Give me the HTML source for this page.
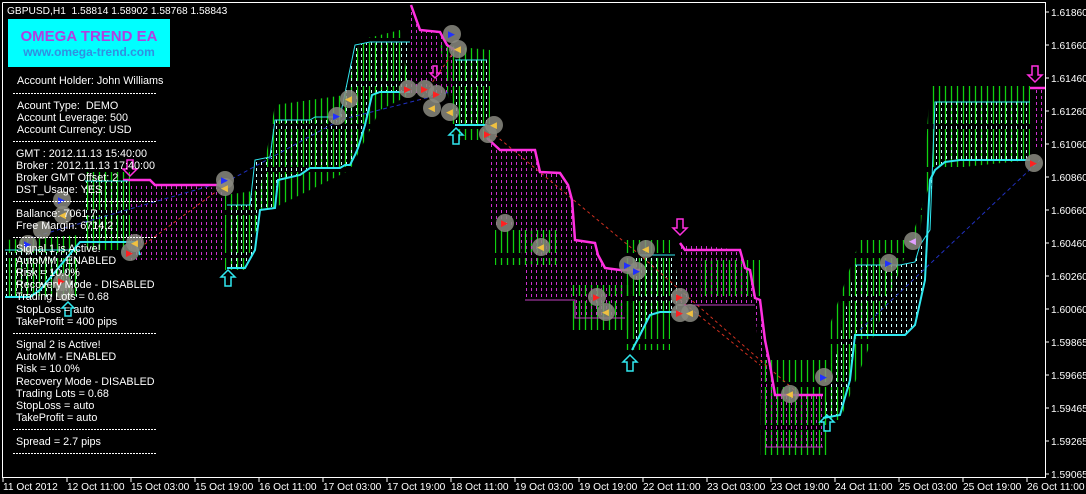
<!DOCTYPE html>
<html><head><meta charset="utf-8">
<style>
html,body{margin:0;padding:0;background:#000;}
body{width:1086px;height:494px;overflow:hidden;position:relative;}
svg{position:absolute;left:0;top:0;}
.t{fill:#fff;font-size:10.8px;font-family:"Liberation Sans",sans-serif;}
.ax{fill:#fff;font-size:10.2px;font-family:"Liberation Sans",sans-serif;}
</style></head><body>
<svg width="1086" height="494" viewBox="0 0 1086 494">
<defs>
<pattern id="pm" width="5" height="6" patternUnits="userSpaceOnUse"><line x1="1.5" y1="0" x2="1.5" y2="3" stroke="#d030d0" stroke-width="1"/></pattern>
<pattern id="pc" width="5" height="6" patternUnits="userSpaceOnUse"><line x1="1.5" y1="0" x2="1.5" y2="3" stroke="#d0ffff" stroke-width="1"/></pattern>
<pattern id="pg" width="6" height="43" patternUnits="userSpaceOnUse"><line x1="3.5" y1="0" x2="3.5" y2="38" stroke="#10d010" stroke-width="1.3"/></pattern>
<g id="mk"><circle r="9" fill="#8a8a80" opacity="0.85"/></g>
</defs>
<rect width="1086" height="494" fill="#000"/>
<g>
<polygon fill="url(#pg)" points="5,240 80,235 80,300 5,300"/>
<polygon fill="url(#pg)" points="85,170 130,170 130,250 85,250"/>
<polygon fill="url(#pg)" points="225,195 260,190 275,105 345,95 360,40 400,30 410,95 380,110 350,170 260,215 245,270 225,270"/>
<polygon fill="url(#pg)" points="440,45 490,50 490,140 455,140"/>
<polygon fill="url(#pg)" points="495,230 560,230 560,265 495,265"/>
<polygon fill="url(#pg)" points="570,285 630,285 630,330 570,330"/>
<polygon fill="url(#pg)" points="625,240 670,240 670,350 625,350"/>
<polygon fill="url(#pg)" points="700,260 760,260 760,300 700,300"/>
<polygon fill="url(#pg)" points="760,360 830,360 830,455 760,455"/>
<polygon fill="url(#pg)" points="828,330 860,240 920,240 930,85 1030,85 1030,160 935,170 900,270 840,420 828,420"/>
</g>
<polygon fill="url(#pm)" points="130,183 225,188 225,260 130,260"/>
<polygon fill="url(#pm)" points="411,8 420,30 440,33 455,52 455,95 411,95"/>
<polygon fill="url(#pm)" points="490,138 500,150 535,150 540,172 560,173 568,185 572,200 575,240 595,243 598,255 605,268 625,270 625,318 575,318 575,300 525,300 520,228 490,228"/>
<polygon fill="url(#pm)" points="680,243 740,250 745,268 750,270 755,298 760,300 765,340 770,365 775,395 823,395 823,447 765,447 755,305 680,305"/>
<polygon fill="url(#pm)" points="1032,88 1045,88 1045,148 1032,148"/>
<polygon fill="url(#pc)" points="5,250 80,250 80,297 5,297"/>
<polygon fill="url(#pc)" points="85,181 128,181 128,240 85,240"/>
<polygon fill="url(#pc)" points="227,205 250,205 255,160 270,157 275,120 310,120 315,117 340,117 355,45 370,42 410,42 410,92 380,92 372,95 365,125 358,148 350,165 310,168 300,175 278,180 275,208 260,210 255,250 245,268 227,268"/>
<polygon fill="url(#pc)" points="455,60 487,60 487,125 455,125"/>
<polygon fill="url(#pc)" points="640,255 675,255 680,312 660,312 650,315 640,335 632,350 632,260"/>
<polygon fill="url(#pc)" points="855,265 900,265 915,262 920,245 930,230 935,100 1030,100 1030,160 960,160 945,162 935,170 930,180 925,280 915,325 905,335 855,335 850,380 840,415 823,418"/>
<polyline fill="none" stroke="#2030c0" stroke-width="1" stroke-dasharray="4,3" points="30,238 230,180 340,120 450,92"/>
<polyline fill="none" stroke="#2030c0" stroke-width="1" stroke-dasharray="4,3" points="860,330 1040,160"/>
<polyline fill="none" stroke="#d03020" stroke-width="1" stroke-dasharray="3,3" points="130,255 225,185"/>
<polyline fill="none" stroke="#d03020" stroke-width="1" stroke-dasharray="3,3" points="455,50 420,100"/>
<polyline fill="none" stroke="#d03020" stroke-width="1" stroke-dasharray="3,3" points="495,135 640,255 800,395"/>
<polyline fill="none" stroke="#d03020" stroke-width="1" stroke-dasharray="3,3" points="680,300 760,365"/>
<g fill="none" stroke="#ff30e0" stroke-width="2.5">
<polyline points="123,180 150,180 155,185 225,185"/>
<polyline points="411,5 420,30 440,32 447,45 455,50"/>
<polyline points="487,138 500,150 535,150 540,172 560,173 568,185 572,200 575,240 595,243 598,255 605,268 620,270 640,270"/>
<polyline points="680,243 685,250 740,250 745,268 750,270 755,298 760,300 765,340 770,365 775,395 823,395"/>
<polyline points="1030,88 1045,88"/>
</g>
<g fill="none" stroke="#c040c0" stroke-width="1">
<polyline points="525,300 575,300 575,318 625,318"/>
<polyline points="680,305 755,305"/>
<polyline points="765,447 823,447"/>
</g>
<g fill="none" stroke="#30e8f0" stroke-width="2">
<polyline points="5,297 30,297 40,290 80,242 135,242 140,255"/>
<polyline points="227,268 245,268 255,250 260,210 275,208 278,180 300,175 310,168 340,168 345,165 350,165 355,155 358,148 365,125 372,95 380,92 410,92"/>
<polyline points="455,125 487,125"/>
<polyline points="632,350 640,335 650,315 660,312 680,312"/>
<polyline points="823,418 840,415 850,380 855,335 905,335 915,325 925,280 930,180 935,170 945,162 960,160 1030,160"/>
</g>
<g fill="none" stroke="#30e8f0" stroke-width="1">
<polyline points="5,250 80,250"/>
<polyline points="85,181 128,181"/>
<polyline points="227,205 250,205 255,160 270,157 275,120 310,120 315,117 340,117 355,45 370,42 410,42"/>
<polyline points="455,60 487,60"/>
<polyline points="640,255 675,255"/>
<polyline points="855,265 900,265 915,262 920,245 930,230 935,102 1030,102"/>
</g>
<g fill="none" stroke="#30e8f0" stroke-width="1.5">
<path d="M228,270 l-7,7 h4 v9 h6 v-9 h4 z"/>
<path d="M456,128 l-7,7 h4 v9 h6 v-9 h4 z"/>
<path d="M630,355 l-7,7 h4 v9 h6 v-9 h4 z"/>
<path d="M827,415 l-7,7 h4 v9 h6 v-9 h4 z"/>
<path d="M68,302 l-6,6 h3 v8 h6 v-8 h3 z"/>
</g>
<g fill="none" stroke="#ff30e0" stroke-width="1.5">
<path d="M130,176 l-7,-7 h4 v-9 h6 v9 h4 z"/>
<path d="M680,235 l-7,-7 h4 v-9 h6 v9 h4 z"/>
<path d="M1035,82 l-7,-7 h4 v-9 h6 v9 h4 z"/>
<path d="M435,78 l-5,-5 h3 v-7 h4 v7 h3 z"/>
</g>
<g>
<use href="#mk" x="452" y="34"/><use href="#mk" x="458" y="49"/>
<use href="#mk" x="408" y="89"/><use href="#mk" x="425" y="89"/><use href="#mk" x="437" y="94"/>
<use href="#mk" x="432" y="108"/><use href="#mk" x="450" y="112"/>
<use href="#mk" x="349" y="99"/><use href="#mk" x="337" y="116"/>
<use href="#mk" x="225" y="180"/><use href="#mk" x="225" y="187"/>
<use href="#mk" x="130" y="252"/><use href="#mk" x="135" y="243"/>
<use href="#mk" x="28" y="244"/><use href="#mk" x="42" y="230"/><use href="#mk" x="62" y="200"/><use href="#mk" x="63" y="215"/><use href="#mk" x="62" y="282"/><use href="#mk" x="65" y="292"/>
<use href="#mk" x="494" y="125"/><use href="#mk" x="488" y="134"/>
<use href="#mk" x="505" y="223"/><use href="#mk" x="541" y="247"/>
<use href="#mk" x="597" y="297"/><use href="#mk" x="606" y="312"/>
<use href="#mk" x="628" y="265"/><use href="#mk" x="637" y="271"/><use href="#mk" x="646" y="249"/>
<use href="#mk" x="680" y="297"/><use href="#mk" x="680" y="313"/><use href="#mk" x="690" y="313"/>
<use href="#mk" x="790" y="394"/><use href="#mk" x="824" y="377"/>
<use href="#mk" x="889" y="263"/><use href="#mk" x="913" y="241"/><use href="#mk" x="1034" y="163"/>
</g>
<g font-size="9" font-family="DejaVu Sans">
<text x="448" y="37" fill="#2030ff">▶</text><text x="454" y="52" fill="#f0c040">◀</text>
<text x="404" y="92" fill="#ff2020">▶</text><text x="421" y="92" fill="#ff2020">▶</text><text x="433" y="97" fill="#ff2020">▶</text>
<text x="428" y="111" fill="#f0c040">◀</text><text x="446" y="115" fill="#f0c040">◀</text>
<text x="345" y="102" fill="#f0c040">◀</text><text x="333" y="119" fill="#2030ff">▶</text>
<text x="221" y="183" fill="#2030ff">▶</text><text x="221" y="191" fill="#f0c040">◀</text>
<text x="126" y="256" fill="#ff2020">▶</text><text x="131" y="246" fill="#f0c040">◀</text>
<text x="24" y="247" fill="#2030ff">▶</text><text x="58" y="203" fill="#2030ff">▶</text><text x="59" y="218" fill="#f0c040">◀</text><text x="58" y="284" fill="#ff2020">▶</text>
<text x="490" y="128" fill="#f0c040">◀</text><text x="484" y="137" fill="#ff2020">▶</text>
<text x="501" y="226" fill="#ff2020">▶</text><text x="537" y="250" fill="#f0c040">◀</text>
<text x="593" y="300" fill="#ff2020">▶</text><text x="602" y="315" fill="#f0c040">◀</text>
<text x="624" y="268" fill="#2030ff">▶</text><text x="633" y="274" fill="#2030ff">▶</text><text x="642" y="252" fill="#f0c040">◀</text>
<text x="676" y="300" fill="#ff2020">▶</text><text x="676" y="316" fill="#ff2020">▶</text><text x="686" y="316" fill="#f0c040">◀</text>
<text x="786" y="397" fill="#f0c040">◀</text><text x="820" y="380" fill="#2030ff">▶</text>
<text x="885" y="266" fill="#2030ff">▶</text><text x="909" y="244" fill="#e0a0ff">◀</text><text x="1030" y="166" fill="#ff2020">▶</text>
</g>
<polyline fill="none" stroke="#fff" stroke-width="1" points="2.5,2.5 1045.5,2.5 1045.5,477.5 2.5,477.5 2.5,2.5"/>
<g stroke="#fff">
<line x1="1045" y1="12" x2="1049" y2="12"/><line x1="1045" y1="45" x2="1049" y2="45"/><line x1="1045" y1="78" x2="1049" y2="78"/><line x1="1045" y1="111" x2="1049" y2="111"/><line x1="1045" y1="144" x2="1049" y2="144"/><line x1="1045" y1="177" x2="1049" y2="177"/><line x1="1045" y1="210" x2="1049" y2="210"/><line x1="1045" y1="243" x2="1049" y2="243"/><line x1="1045" y1="276" x2="1049" y2="276"/><line x1="1045" y1="309" x2="1049" y2="309"/><line x1="1045" y1="342" x2="1049" y2="342"/><line x1="1045" y1="375" x2="1049" y2="375"/><line x1="1045" y1="408" x2="1049" y2="408"/><line x1="1045" y1="441" x2="1049" y2="441"/><line x1="1045" y1="474" x2="1049" y2="474"/>
</g>
<g class="ax">
<text x="1051" y="16">1.61860</text><text x="1051" y="49">1.61660</text><text x="1051" y="82">1.61460</text><text x="1051" y="115">1.61260</text><text x="1051" y="148">1.61060</text><text x="1051" y="181">1.60860</text><text x="1051" y="214">1.60660</text><text x="1051" y="247">1.60460</text><text x="1051" y="280">1.60260</text><text x="1051" y="313">1.60060</text><text x="1051" y="346">1.59865</text><text x="1051" y="379">1.59665</text><text x="1051" y="412">1.59465</text><text x="1051" y="445">1.59265</text><text x="1051" y="478">1.59065</text>
</g>
<g stroke="#fff">
<line x1="3" y1="477" x2="3" y2="482"/><line x1="67" y1="477" x2="67" y2="482"/><line x1="131" y1="477" x2="131" y2="482"/><line x1="195" y1="477" x2="195" y2="482"/><line x1="259" y1="477" x2="259" y2="482"/><line x1="323" y1="477" x2="323" y2="482"/><line x1="387" y1="477" x2="387" y2="482"/><line x1="451" y1="477" x2="451" y2="482"/><line x1="515" y1="477" x2="515" y2="482"/><line x1="579" y1="477" x2="579" y2="482"/><line x1="643" y1="477" x2="643" y2="482"/><line x1="707" y1="477" x2="707" y2="482"/><line x1="771" y1="477" x2="771" y2="482"/><line x1="835" y1="477" x2="835" y2="482"/><line x1="899" y1="477" x2="899" y2="482"/><line x1="963" y1="477" x2="963" y2="482"/><line x1="1027" y1="477" x2="1027" y2="482"/>
</g>
<g class="ax">
<text x="3" y="490">11 Oct 2012</text><text x="67" y="490">12 Oct 11:00</text><text x="131" y="490">15 Oct 03:00</text><text x="195" y="490">15 Oct 19:00</text><text x="259" y="490">16 Oct 11:00</text><text x="323" y="490">17 Oct 03:00</text><text x="387" y="490">17 Oct 19:00</text><text x="451" y="490">18 Oct 11:00</text><text x="515" y="490">19 Oct 03:00</text><text x="579" y="490">19 Oct 19:00</text><text x="643" y="490">22 Oct 11:00</text><text x="707" y="490">23 Oct 03:00</text><text x="771" y="490">23 Oct 19:00</text><text x="835" y="490">24 Oct 11:00</text><text x="899" y="490">25 Oct 03:00</text><text x="963" y="490">25 Oct 19:00</text><text x="1027" y="490">26 Oct 11:00</text>
</g>
<text class="ax" x="7" y="14" xml:space="preserve">GBPUSD,H1  1.58814 1.58902 1.58768 1.58843</text>
<rect x="8" y="19" width="162" height="48" fill="#00ffff"/>
<text x="89" y="41" text-anchor="middle" fill="#b040e0" font-size="15" font-weight="bold" font-family="'Liberation Sans',sans-serif">OMEGA TREND EA</text>
<text x="89" y="56" text-anchor="middle" fill="#3090e0" font-size="12" font-weight="bold" font-family="'Liberation Sans',sans-serif">www.omega-trend.com</text>
<g class="t">
<text x="17" y="84">Account Holder: John Williams</text>
<text x="17" y="109" xml:space="preserve">Acount Type:  DEMO</text>
<text x="17" y="121">Account Leverage: 500</text>
<text x="17" y="133">Account Currency: USD</text>
<text x="16" y="157">GMT : 2012.11.13 15:40:00</text>
<text x="16" y="169">Broker : 2012.11.13 17:40:00</text>
<text x="16" y="181">Broker GMT Offset: 2</text>
<text x="16" y="193">DST_Usage: YES</text>
<text x="16" y="217">Ballance: 7061.7</text>
<text x="16" y="229">Free Margin: 6714.2</text>
<text x="16" y="252">Signal 1 is Active!</text>
<text x="16" y="264">AutoMM - ENABLED</text>
<text x="16" y="276">Risk = 10.0%</text>
<text x="16" y="288">Recovery Mode - DISABLED</text>
<text x="16" y="300">Trading Lots = 0.68</text>
<text x="16" y="313">StopLoss = auto</text>
<text x="16" y="325">TakeProfit = 400 pips</text>
<text x="16" y="348">Signal 2 is Active!</text>
<text x="16" y="360">AutoMM - ENABLED</text>
<text x="16" y="372">Risk = 10.0%</text>
<text x="16" y="385">Recovery Mode - DISABLED</text>
<text x="16" y="397">Trading Lots = 0.68</text>
<text x="16" y="409">StopLoss = auto</text>
<text x="16" y="421">TakeProfit = auto</text>
<text x="16" y="445">Spread = 2.7 pips</text>
</g>
<g stroke="#fff" stroke-width="1" stroke-dasharray="2,1">
<line x1="13" y1="93.5" x2="157" y2="93.5"/><line x1="13" y1="141.5" x2="157" y2="141.5"/><line x1="13" y1="201.5" x2="157" y2="201.5"/><line x1="13" y1="237.5" x2="157" y2="237.5"/><line x1="13" y1="333.5" x2="157" y2="333.5"/><line x1="13" y1="429.5" x2="157" y2="429.5"/><line x1="13" y1="453.5" x2="157" y2="453.5"/>
</g>
</svg>
</body></html>
